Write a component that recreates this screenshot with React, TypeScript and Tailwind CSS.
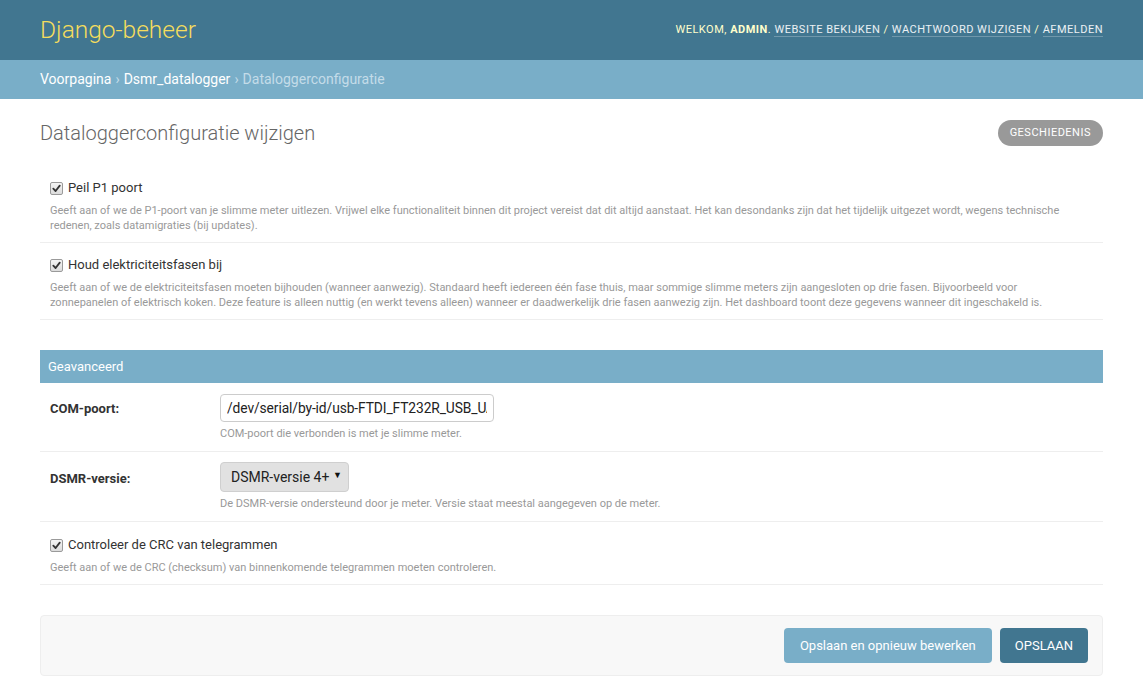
import React from 'react';

function Check() {
  return (
    <span className="inline-flex h-[13px] w-[13px] shrink-0 items-center justify-center rounded-[2px] border border-[#9a9a9a] bg-gradient-to-b from-[#f4f4f4] to-[#dcdcdc]">
      <svg width="9" height="9" viewBox="0 0 10 10">
        <path d="M1.5 5.2 L4 7.8 L8.6 1.8" fill="none" stroke="#333" strokeWidth="2" strokeLinecap="round" strokeLinejoin="round" />
      </svg>
    </span>
  );
}

function CheckRow({ label, help, top = 10 }: { label: string; help: string[]; top?: number }) {
  return (
    <div className={`border-b border-[#eee] px-[10px] pb-[9px] ${top === 11 ? 'pt-[11px]' : 'pt-[10px]'}`}>
      <div className="flex h-[24px] items-center gap-[5px] text-[13px] text-[#333]">
        <Check />
        <span>{label}</span>
      </div>
      <div className="mt-[3px] text-[11px] leading-[15px] text-[#999]">
        {help.map((h, i) => (
          <div key={i}>{h}</div>
        ))}
      </div>
    </div>
  );
}

export default function App() {
  return (
    <div className="min-h-[700px] bg-white font-['Roboto','Liberation_Sans',sans-serif] text-[#333]">
      <header className="flex h-[60px] items-center justify-between bg-[#417690] px-[40px]">
        <div className="text-[24.5px] font-light text-[#f5dd5d]">Django-beheer</div>
        <div className="text-[11px] uppercase tracking-[0.5px] text-[#ffc]">
          Welkom, <strong className="font-bold">admin</strong>.{' '}
          <a className="border-b border-white/25 text-white/90">Website bekijken</a> /{' '}
          <a className="border-b border-white/25 text-white/90">Wachtwoord wijzigen</a> /{' '}
          <a className="border-b border-white/25 text-white/90">Afmelden</a>
        </div>
      </header>

      <div className="flex h-[39px] items-center bg-[#79aec8] px-[40px] text-[14px] text-[#c4dce8]">
        <a className="text-white">Voorpagina</a>
        <span className="mx-[4px]">›</span>
        <a className="text-white">Dsmr_datalogger</a>
        <span className="mx-[4px]">›</span>
        <span>Dataloggerconfiguratie</span>
      </div>

      <main className="px-[40px] pt-[20px]">
        <div className="mb-[19px] flex h-[28px] items-center justify-between">
          <h1 className="text-[20px] font-light text-[#666]">Dataloggerconfiguratie wijzigen</h1>
          <a className="rounded-[15px] bg-[#999] px-[12px] py-[6px] text-[11px] uppercase leading-[14px] tracking-[0.5px] text-white">
            Geschiedenis
          </a>
        </div>

        <fieldset>
          <CheckRow
            label="Peil P1 poort"
            help={[
              'Geeft aan of we de P1-poort van je slimme meter uitlezen. Vrijwel elke functionaliteit binnen dit project vereist dat dit altijd aanstaat. Het kan desondanks zijn dat het tijdelijk uitgezet wordt, wegens technische',
              'redenen, zoals datamigraties (bij updates).',
            ]}
          />
          <CheckRow
            label="Houd elektriciteitsfasen bij"
            help={[
              'Geeft aan of we de elektriciteitsfasen moeten bijhouden (wanneer aanwezig). Standaard heeft iedereen één fase thuis, maar sommige slimme meters zijn aangesloten op drie fasen. Bijvoorbeeld voor',
              'zonnepanelen of elektrisch koken. Deze feature is alleen nuttig (en werkt tevens alleen) wanneer er daadwerkelijk drie fasen aanwezig zijn. Het dashboard toont deze gegevens wanneer dit ingeschakeld is.',
            ]}
          />
        </fieldset>

        <fieldset className="mt-[30px]">
          <h2 className="bg-[#79aec8] px-[8px] py-[8px] text-[13px] leading-[17px] font-normal text-white">Geavanceerd</h2>

          <div className="border-b border-[#eee] px-[10px] pt-[11px] pb-[10px]">
            <div className="flex">
              <label className="w-[170px] shrink-0 pt-[5px] text-[13px] font-bold text-[#333]">COM-poort:</label>
              <input
                readOnly
                value="/dev/serial/by-id/usb-FTDI_FT232R_USB_UART_A6008isP-if00-port0"
                className="h-[28px] w-[274px] rounded-[4px] border border-[#ccc] px-[6px] text-[13.8px] tracking-[-0.1px] text-[#222] outline-none"
              />
            </div>
            <div className="mt-[4px] pl-[170px] text-[11px] leading-[15px] text-[#999]">
              COM-poort die verbonden is met je slimme meter.
            </div>
          </div>

          <div className="border-b border-[#eee] px-[10px] pt-[10px] pb-[10px]">
            <div className="flex">
              <label className="w-[170px] shrink-0 pt-[7px] text-[13px] font-bold text-[#333]">DSMR-versie:</label>
              <div className="flex h-[30px] w-[129px] items-center justify-between rounded-[4px] border border-[#cfcfcf] bg-[#e1e1e1] pr-[6px] pl-[10px] text-[14px] text-[#222]">
                <span>DSMR-versie 4+</span>
                <span className="pb-[3px] text-[9px] text-[#111]">▼</span>
              </div>
            </div>
            <div className="mt-[4px] pl-[170px] text-[11px] leading-[15px] text-[#999]">
              De DSMR-versie ondersteund door je meter. Versie staat meestal aangegeven op de meter.
            </div>
          </div>

          <CheckRow
            top={11}
            label="Controleer de CRC van telegrammen"
            help={['Geeft aan of we de CRC (checksum) van binnenkomende telegrammen moeten controleren.']}
          />
        </fieldset>

        <div className="mt-[30px] flex justify-end gap-[8px] rounded-[4px] border border-[#eee] bg-[#f8f8f8] px-[14px] py-[12px]">
          <button className="h-[35px] rounded-[4px] bg-[#79aec8] px-[16px] text-[13px] text-white">
            Opslaan en opnieuw bewerken
          </button>
          <button className="h-[35px] rounded-[4px] bg-[#417690] px-[15px] text-[13px] uppercase text-white">
            Opslaan
          </button>
        </div>
      </main>
    </div>
  );
}
